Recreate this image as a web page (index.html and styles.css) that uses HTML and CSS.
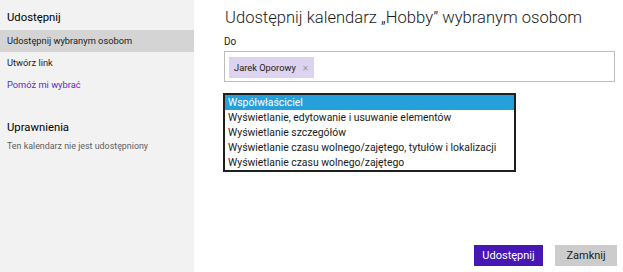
FILE: index.html
```html
<!DOCTYPE html>
<html lang="pl">
<head>
    <meta charset="UTF-8">
    <title>Udostępnij kalendarz</title>
    <link rel="stylesheet" href="styles.css">
</head>
<body>
    <div class="sidebar">
        <div class="side-title">Udostępnij</div>
        <div class="side-item selected">Udostępnij wybranym osobom</div>
        <div class="side-item">Utwórz link</div>
        <div class="side-item link">Pomóż mi wybrać</div>
        <div class="side-title perms">Uprawnienia</div>
        <div class="side-note">Ten kalendarz nie jest udostępniony</div>
    </div>
    <div class="main">
        <div class="title">Udostępnij kalendarz „Hobby” wybranym osobom</div>
        <div class="label">Do</div>
        <div class="to-box">
            <span class="chip">Jarek Oporowy <span class="chip-x">✕</span></span>
        </div>
        <div class="options">
            <div class="option selected">Współwłaściciel</div>
            <div class="option">Wyświetlanie, edytowanie i usuwanie elementów</div>
            <div class="option">Wyświetlanie szczegółów</div>
            <div class="option">Wyświetlanie czasu wolnego/zajętego, tytułów i lokalizacji</div>
            <div class="option">Wyświetlanie czasu wolnego/zajętego</div>
        </div>
        <div class="footer">
            <button class="btn primary">Udostępnij</button>
            <button class="btn">Zamknij</button>
        </div>
    </div>
</body>
</html>
```

FILE: styles.css
```css
body {
    display: flex;
    margin: 0;
    height: 272px;
    font-family: Roboto, "Noto Sans", sans-serif;
    color: #1a1a1a;
    background-color: #fff;
    overflow: hidden;
}
.sidebar {
    width: 194px;
    flex-shrink: 0;
    background-color: #f2f2f2;
}
.side-title {
    padding: 10px 7px 4px;
    font-size: 11.3px;
    line-height: 16px;
    color: #000;
}
.side-title.perms {
    margin-top: 24px;
    padding: 0 7px;
}
.side-item {
    height: 22px;
    line-height: 21px;
    padding-left: 7px;
    font-size: 9.3px;
    color: #1a1a1a;
}
.side-item.selected {
    background-color: #d4d4d4;
}
.side-item.link {
    color: #5b2cc2;
}
.side-note {
    margin-top: 3px;
    padding-left: 7px;
    font-size: 8.9px;
    line-height: 14px;
    color: #5e5e5e;
}
.main {
    flex: 1;
    display: flex;
    flex-direction: column;
    padding: 6px 6px 6px 30px;
}
.title {
    margin-left: 1px;
    font-size: 16.6px;
    font-weight: 300;
    line-height: 24px;
    color: #1a1a1a;
}
.label {
    margin-top: 5px;
    font-size: 10px;
    line-height: 14px;
}
.to-box {
    margin-top: 2px;
    padding: 4px;
    border: 1px solid #bcbcbc;
    width: 381px;
    height: 21px;
}
.chip {
    display: inline-block;
    height: 21px;
    line-height: 21px;
    padding: 0 5px;
    font-size: 9.3px;
    background-color: #dbd3ef;
    color: #1a1a1a;
}
.chip-x {
    margin-left: 4px;
    font-size: 8px;
    color: #999;
}
.options {
    margin-top: 11px;
    margin-left: -1px;
    width: 289px;
    border: 2px solid #1f1f1f;
}
.option {
    height: 15px;
    line-height: 15px;
    padding-left: 3px;
    font-size: 10.4px;
    color: #1a1a1a;
    white-space: nowrap;
}
.option.selected {
    background-color: #26a0da;
    color: #fff;
}
.footer {
    margin-top: auto;
    display: flex;
    justify-content: flex-end;
    gap: 12px;
}
.btn {
    height: 21px;
    padding: 0;
    width: 62px;
    border: none;
    font-family: inherit;
    font-size: 11px;
    background-color: #cccccc;
    color: #1a1a1a;
}
.btn.primary {
    width: 69px;
    background-color: #4617b4;
    color: #fff;
}
```
